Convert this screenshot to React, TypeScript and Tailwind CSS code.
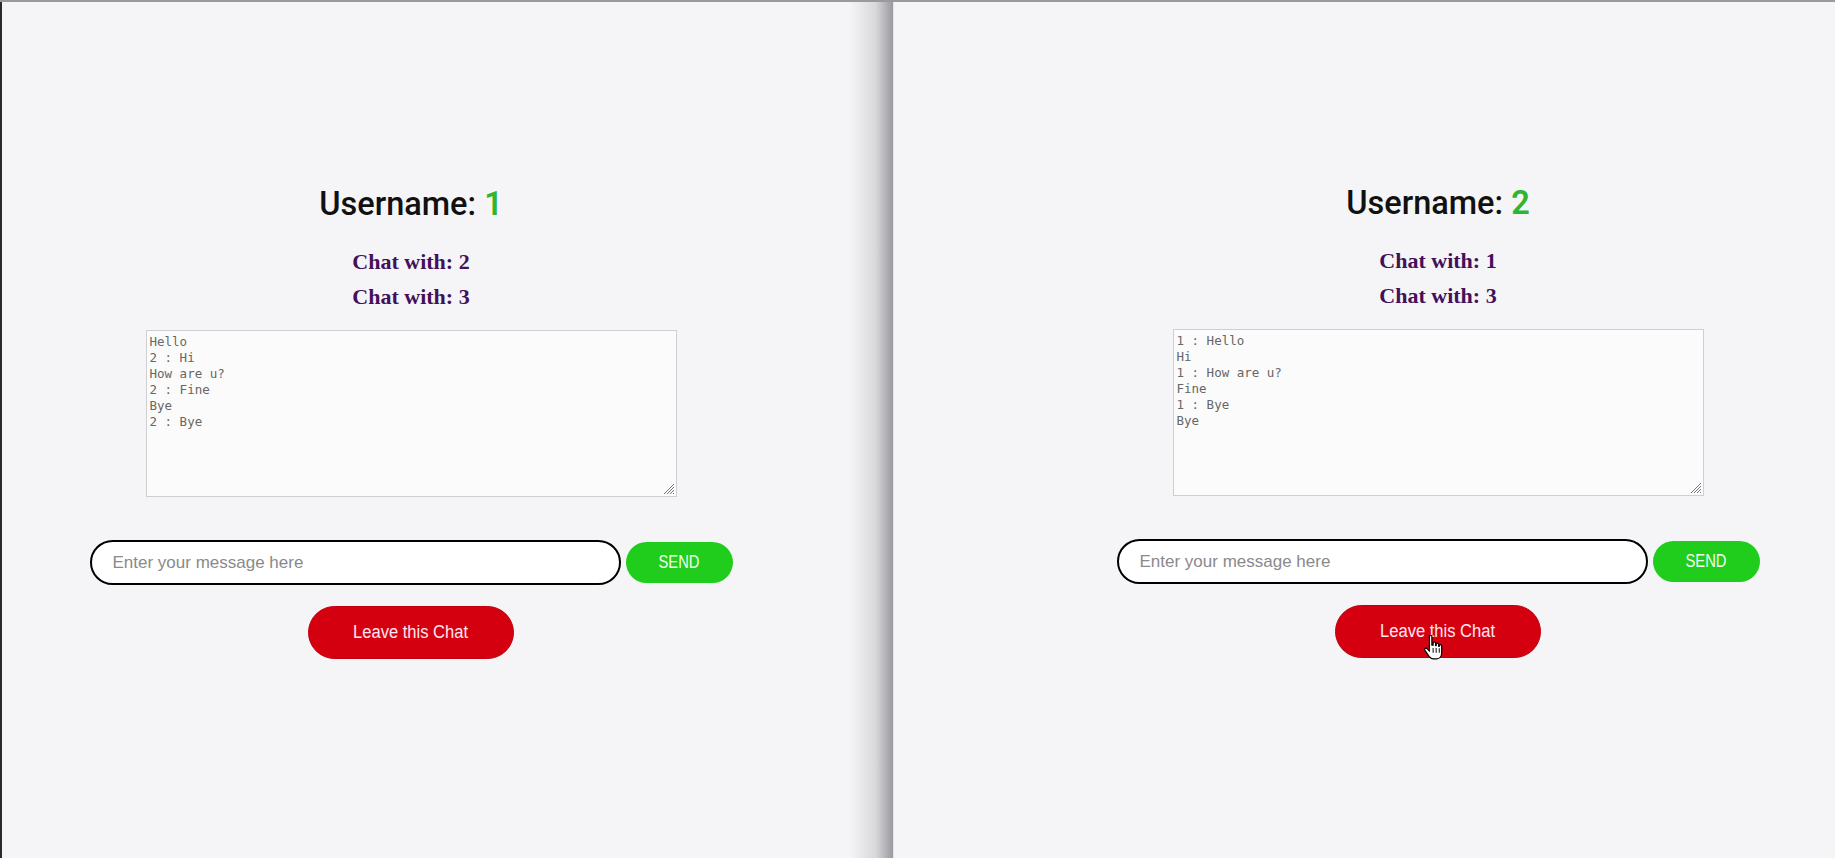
import React from "react";

const HandCursor = () => (
  <svg
    width="21"
    height="27"
    viewBox="0 0 17 22"
    className="pointer-events-none absolute left-[87px] top-[30px]"
  >
    <path
      d="M6 1.2 C6 0.5 6.5 0.2 7 0.2 C7.6 0.2 8 0.5 8 1.2 V8.3 H9 V6.6 C9 6 9.4 5.7 10 5.7 C10.6 5.7 11 6 11 6.6 V8.6 H11.5 V7.6 C11.5 7.1 12 6.7 12.5 6.7 C13 6.7 13.5 7.1 13.5 7.6 V9.2 H14 V8.7 C14 8.2 14.4 7.8 15 7.8 C15.6 7.8 16 8.2 16 8.7 V14.2 C16 17.2 14.3 19.4 12 19.4 H9.2 C7.6 19.4 6.6 18.6 5.7 17.4 L2.3 12.6 C1.9 12 2.1 11.2 2.7 10.9 C3.3 10.6 3.9 10.8 4.3 11.3 L6 13.2 Z"
      fill="white"
      stroke="black"
      strokeWidth="1"
      strokeLinejoin="round"
    />
    <path d="M9 10.5 V14.5 M11.5 10.5 V14.5 M14 10.8 V14.5" stroke="black" strokeWidth="0.8" />
  </svg>
);

const Grip = () => (
  <svg
    width="13"
    height="13"
    viewBox="0 0 13 13"
    className="pointer-events-none absolute bottom-[2px] right-[2px]"
  >
    <path d="M12 2 L2 12 M12 5 L5 12 M12 8 L8 12 M12 11 L11 12" stroke="#777" strokeWidth="1" />
  </svg>
);

function ChatPanel({
  user,
  others,
  log,
  cursor,
}: {
  user: string;
  others: string[];
  log: string;
  cursor?: boolean;
}) {
  return (
    <div className="flex w-[818px] shrink-0 flex-col items-center">
      <h1
        className="mt-[182px] text-[32.5px] leading-[40px] font-medium text-[#111]"
        style={{ fontFamily: "Roboto, 'Liberation Sans', sans-serif" }}
      >
        Username: <span className="font-semibold text-[#2fb52f]">{user}</span>
      </h1>
      <div className="mt-[20px] flex flex-col items-center">
        {others.map((o) => (
          <div
            key={o}
            className="text-[22px] leading-[35px] font-bold text-[#44105a]"
            style={{ fontFamily: "'Liberation Serif', 'Times New Roman', serif" }}
          >
            Chat with: {o}
          </div>
        ))}
      </div>
      <div className="relative mt-[16px]">
        <textarea
          readOnly
          value={log}
          className="block h-[167px] w-[531px] resize-none border border-[#cfcfcf] bg-[#fbfbfb] px-[3px] pt-[3px] text-[12.5px] leading-[16px] text-[#666] outline-none"
          style={{ fontFamily: "'DejaVu Sans Mono', 'Liberation Mono', monospace" }}
        />
        <Grip />
      </div>
      <div className="mt-[43px] flex items-center gap-[5px]">
        <input
          placeholder="Enter your message here"
          className="h-[45px] w-[531px] rounded-full border-2 border-black bg-white pl-[21px] text-[17px] text-[#222] outline-none placeholder:text-[#8a8a8a]"
          style={{ fontFamily: "'Liberation Sans', Arial, sans-serif" }}
        />
        <button
          className="h-[41px] w-[107px] rounded-full bg-[#20cd1c] text-[#f2fff0]"
          style={{ fontFamily: "'Liberation Sans', Arial, sans-serif" }}
        >
          <span className="inline-block scale-x-[0.82] text-[18px]">SEND</span>
        </button>
      </div>
      <div className="relative mt-[21px]">
        <button
          className="h-[53px] w-[206px] rounded-full border border-[#c0000e] bg-[#d5000f] text-[#ffe6f2]"
          style={{ fontFamily: "'Liberation Sans', Arial, sans-serif" }}
        >
          <span className="inline-block scale-x-[0.92] text-[18px]">Leave this Chat</span>
        </button>
        {cursor && <HandCursor />}
      </div>
    </div>
  );
}

export default function App() {
  return (
    <div className="flex h-[858px] w-[1835px] overflow-hidden border-t-2 border-[#9a9a9a] bg-[#f5f5f7]">
      <div className="flex h-full w-[893px] shrink-0 border-l-2 border-[#2a2a2a]">
        <ChatPanel
          user="1"
          others={["2", "3"]}
          log={"Hello\n2 : Hi\nHow are u?\n2 : Fine\nBye\n2 : Bye"}
        />
        <div className="w-[30px] shrink-0" />
        <div className="h-full w-[43px] shrink-0 bg-gradient-to-r from-[#f5f5f7] via-[#d8d8db] via-60% to-[#99999e]" />
      </div>
      <div className="h-full w-px shrink-0 bg-[#e6e6e8]" />
      <div className="-mt-px flex h-full flex-1 pl-[135px]">
        <ChatPanel
          user="2"
          others={["1", "3"]}
          log={"1 : Hello\nHi\n1 : How are u?\nFine\n1 : Bye\nBye"}
          cursor
        />
      </div>
    </div>
  );
}
